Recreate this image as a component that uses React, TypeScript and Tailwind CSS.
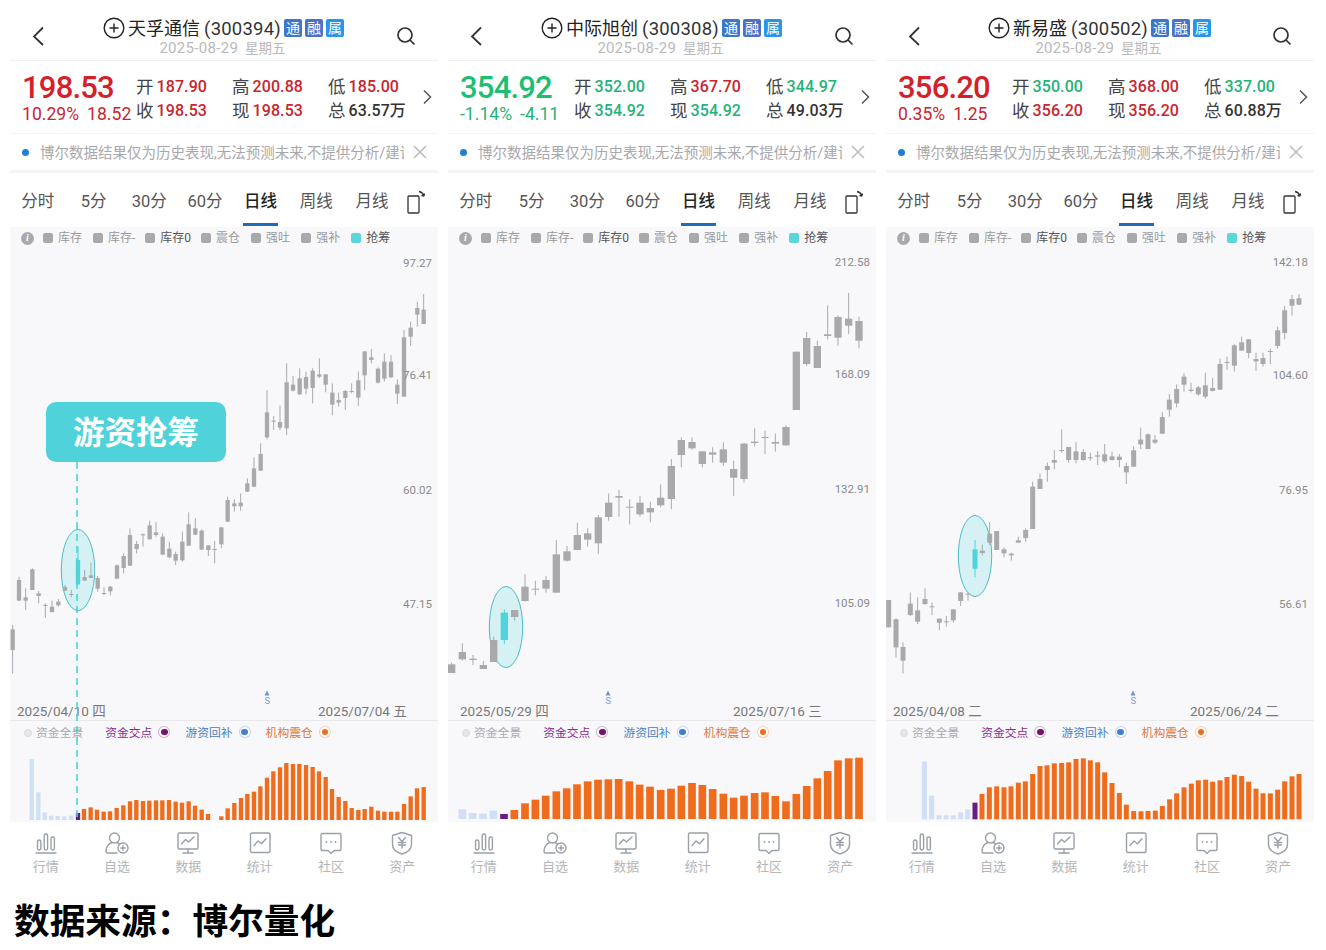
import React from "react";

type C = number[];
const SANS = "font-['Roboto','Noto_Sans_CJK_SC',sans-serif]";

// candle data in 3x-zoomed coordinates: [x, bodyTop, bodyBottom, wickTop, wickBottom]
const p1a: C[] = [[38,418,480,405,550],[57,270,332,260,332],[77,322,332,295,360],[97,238,300,235,300],[116,310,318,303,340],[136,345,347,340,384],[156,350,366,332,368],[175,335,346,327,350],[195,291,302,285,303],[214,312,314,300,322],[293,264,296,258,305],[312,309,311,292,316],[331,290,304,288,316],[351,226,266,224,266],[371,198,234,190,250],[390,135,227,115,228],[410,162,177,153,190],[429,133,135,130,170],[449,106,148,92,148],[468,127,135,97,140],[488,140,194,130,194],[508,176,202,155,205],[527,192,212,185,225],[547,155,211,125,215],[566,103,167,67,167],[586,115,134,85,135],[605,122,179,118,180],[625,166,180,165,198],[644,177,179,153,220],[664,112,163,112,175],[683,30,95,20,95],[703,40,49,28,65],[722,38,49,10,62],[254,261,272,240,272],[273,256,264,218,264]];
const p1b: C[] = [[742,700,725,685,726],[762,655,710,622,712],[782,612,662,580,662],[801,487,562,420,568],[821,512,515,498,540],[840,516,533,467,540],[860,397,535,340,555],[879,404,422,378,425],[899,385,433,355,435],[918,381,416,365,433],[938,362,414,355,460],[958,373,380,325,384],[977,373,404,373,427],[997,428,464,400,495],[1016,450,458,428,470],[1036,423,444,420,480],[1055,423,426,400,430],[1075,391,443,365,468],[1094,304,376,304,420],[1114,322,330,297,340],[1134,356,398,352,400],[1153,335,386,310,395],[1173,335,382,315,383],[1192,404,431,388,462],[1212,262,440,240,440],[1232,233,260,215,288],[1252,174,194,155,230],[1271,179,222,132,222]];
const p2a: C[] = [[20,523,549,518,549],[52,486,508,460,512],[84,506,510,495,525],[115,525,537,513,537],[146,450,516,440,516],[209,360,381,360,392],[240,290,333,253,335],[271,296,299,272,316],[303,270,296,258,308],[334,193,308,150,308],[366,184,212,168,215],[397,135,180,98,180],[428,130,149,115,170],[460,82,160,75,192],[491,38,81,10,92],[522,18,23,0,80],[554,50,52,28,103],[585,38,73,18,80],[616,54,67,35,97],[647,23,46,-17,52],[679,-72,27,-93,58]];
const p2b: C[] = [[709,570,615,562,652],[741,576,595,562,600],[772,604,642,604,652],[803,607,614,592,638],[835,598,638,577,648],[866,657,683,632,738],[897,581,687,578,697],[929,575,579,535,590],[960,561,564,542,612],[991,576,581,550,605],[1023,531,586,525,587],[1054,305,480,305,480],[1085,264,342,246,348],[1117,288,354,272,354],[1148,253,258,166,268],[1179,201,263,196,287],[1211,206,227,129,252],[1242,213,272,200,295]];
const p3a: C[] = [[11,330,412,330,412],[33,388,472,385,503],[54,471,512,457,550],[76,341,375,308,378],[98,361,395,322,402],[120,327,342,295,345],[141,349,351,338,375],[163,386,398,386,420],[184,394,396,378,410],[205,358,391,358,398],[227,307,333,307,348],[249,311,313,308,332],[292,182,189,164,196],[314,131,158,97,165],[335,123,180,123,180],[357,178,190,172,202],[379,191,196,188,212],[400,151,158,140,158],[422,120,144,115,155],[443,-10,117,-25,117],[465,-33,-3,-50,-3]];
const p3b: C[] = [[487,648,660,638,695],[508,630,638,600,658],[530,600,602,538,608],[551,591,630,591,638],[573,604,630,577,640],[595,606,630,597,632],[616,622,624,608,632],[638,616,620,603,645],[659,613,634,582,638],[681,619,630,605,632],[703,620,630,612,652],[724,648,667,638,702],[746,601,650,588,650],[767,569,583,533,597],[789,553,597,550,598],[810,569,578,555,582],[832,501,551,486,551],[853,449,479,432,500],[875,417,460,403,472],[897,380,404,370,425],[918,419,423,398,427],[940,412,433,408,437],[961,406,440,368,446],[983,414,423,383,424],[1005,342,419,326,419],[1026,336,339,320,360],[1048,286,347,283,365],[1070,277,302,260,302],[1091,268,309,268,325],[1113,327,334,308,363],[1134,324,342,308,350],[1156,303,306,296,342],[1178,241,288,230,296],[1199,181,249,168,268],[1221,147,167,135,197],[1242,145,164,132,165]];

// volume bars: [x, top] in zoom coordinates, kind 0 light, 1 purple, 2 orange
const v1 = [[95,132,0],[115,232,0],[134,292,0],[154,302,0],[173,303,0],[193,304,0],[213,302,0],[234,294,1],[252,282,2],[272,277,2],[291,284,2],[311,290,2],[330,289,2],[350,279,2],[370,271,2],[390,259,2],[409,255,2],[429,258,2],[448,257,2],[468,256,2],[487,256,2],[507,255,2],[527,260,2],[546,263,2],[566,259,2],[585,272,2],[605,284,2],[624,297,2],[664,304,2],[683,280,2],[703,264,2],[723,249,2],[742,237,2],[762,230,2],[781,214,2],[801,188,2],[820,169,2],[840,157,2],[859,144,2],[879,147,2],[898,147,2],[918,150,2],[938,156,2],[957,169,2],[977,186,2],[996,222,2],[1016,246,2],[1036,258,2],[1055,279,2],[1075,285,2],[1094,282,2],[1114,275,2],[1134,287,2],[1153,290,2],[1173,290,2],[1192,290,2],[1212,267,2],[1232,244,2],[1251,220,2],[1271,216,2]];
const v2 = [[52,958,0],[83,969,0],[114,971,0],[145,962,0],[177,972,1],...[[208,960],[240,940],[271,929],[302,917],[334,904],[365,895],[396,883],[428,874],[459,869],[490,868],[521,867],[553,874],[584,884],[615,890],[647,900],[678,896],[709,887],[741,879],[772,885],[803,897],[835,911],[866,923],[897,917],[929,909],[960,907],[991,918],[1023,934],[1054,912],[1085,888],[1117,865],[1148,843],[1179,811],[1211,805],[1242,803]].map(([x,t])=>[x,t,2])];
const v3 = [[118,814,0],[140,917,0],[162,976,0],[183,976,0],[205,976,0],[227,967,0],[248,958,0],[270,938,1],...[[291,912],[313,892],[335,889],[357,892],[378,889],[400,878],[421,874],[443,852],[465,828],[486,826],[508,820],[530,819],[551,817],[573,807],[595,805],[616,811],[638,817],[659,847],[681,879],[703,909],[724,944],[746,963],[768,964],[789,963],[811,962],[832,948],[854,928],[875,910],[897,892],[919,881],[940,871],[962,869],[983,875],[1005,871],[1026,861],[1048,854],[1070,858],[1091,875],[1113,896],[1134,910],[1156,910],[1178,899],[1199,874],[1221,859],[1242,852]].map(([x,t])=>[x,t,2])];

type Panel = {
  name: string; code: string; up: boolean; price: string; pct: string; chg: string;
  open: string; openUp: boolean; high: string; low: string; lowUp: boolean; close: string; total: string;
  x0: number; segA: C[]; segB: C[]; aY: number; bodyW: number;
  teal: C; ellipse: [number, number];
  axis: [string, number][]; dateL: [string, number]; dateR: [string, number]; s: number;
  bars: number[][]; barW: number; barBottom: number; barY0: number;
};

const panels: Panel[] = [
  { name: "天孚通信", code: "(300394)", up: true, price: "198.53", pct: "10.29%", chg: "18.52", open: "187.90", openUp: true, high: "200.88", low: "185.00", lowUp: true, close: "198.53", total: "63.57万",
    x0: 0, segA: p1a, segB: p1b, aY: 490, bodyW: 13, teal: [234,210,283,170,285], ellipse: [78,570],
    axis: [["97.27",264],["76.41",376],["60.02",491],["47.15",605]], dateL: ["2025/04/10 四",17], dateR: ["2025/07/04 五",318], s: 267,
    bars: v1, barW: 13, barBottom: 315, barY0: 715 },
  { name: "中际旭创", code: "(300308)", up: false, price: "354.92", pct: "-1.14%", chg: "-4.11", open: "352.00", openUp: false, high: "367.70", low: "344.97", lowUp: false, close: "354.92", total: "49.03万",
    x0: 445, segA: p2a, segB: p2b, aY: 490, bodyW: 22, teal: [178,368,450,358,462], ellipse: [506,627],
    axis: [["212.58",263],["168.09",375],["132.91",490],["105.09",604]], dateL: ["2025/05/29 四",460], dateR: ["2025/07/16 三",733], s: 608,
    bars: v2, barW: 23, barBottom: 987, barY0: 490 },
  { name: "新易盛", code: "(300502)", up: true, price: "356.20", pct: "0.35%", chg: "1.25", open: "350.00", openUp: false, high: "368.00", low: "337.00", lowUp: false, close: "356.20", total: "60.88万",
    x0: 885, segA: p3a, segB: p3b, aY: 490, bodyW: 15, teal: [270,178,236,150,262], ellipse: [975,556],
    axis: [["142.18",263],["104.60",376],["76.95",491],["56.61",605]], dateL: ["2025/04/08 二",893], dateR: ["2025/06/24 二",1190], s: 1133,
    bars: v3, barW: 15, barBottom: 988, barY0: 490 },
];

const RED = "text-[#c9252d]";
const GREEN = "text-[#24b277]";

function Badge({ t, c }: { t: string; c: string }) {
  return <span className={`flex h-[18px] w-[18px] items-center justify-center rounded-[2px] text-[14px] leading-none text-white ${c}`}>{t}</span>;
}

function Stat({ label, value, cls }: { label: string; value: string; cls: string }) {
  return (
    <div className="flex items-center gap-[3px] leading-[24px]">
      <span className="text-[17.5px] text-[#444]">{label}</span>
      <span className={`text-[16px] font-medium tracking-[0.1px] ${cls}`}>{value}</span>
    </div>
  );
}

const legend = [["库存",0],["库存-",0],["库存0",1],["震仓",0],["强吐",0],["强补",0],["抢筹",2]] as const;

function Chart({ p }: { p: Panel }) {
  const left = p.x0 === 0 ? 10 : p.x0 === 445 ? 448 : 886;
  const tx = (x: number) => p.x0 + x / 3 - left;
  const ty = (y: number, y0: number) => y0 + y / 3 - 227;
  const candle = (c: C, y0: number, color: string, k: string) => {
    const [x, bt, bb, wt, wb] = c;
    return (
      <g key={k}>
        <line x1={tx(x)} x2={tx(x)} y1={ty(wt, y0)} y2={ty(wb, y0)} stroke={color} strokeWidth="1" />
        <rect x={tx(x) - p.bodyW / 6} y={ty(bt, y0)} width={p.bodyW / 3} height={Math.max(1, (bb - bt) / 3)} fill={color} />
      </g>
    );
  };
  return (
    <div className="relative h-[493px] bg-[#f8f8fb]">
      <svg className="block h-full w-full" viewBox="0 0 428 493">
        <ellipse cx={p.ellipse[0] - left} cy={p.ellipse[1] - 227} rx="16.7" ry="40.5" fill="#d5f1f4" stroke="#4cbcc6" strokeWidth="1" />
        {p.segA.map((c, i) => candle(c, p.aY, "#a9a9ac", "a" + i))}
        {p.segB.map((c, i) => candle(c, 250, "#a9a9ac", "b" + i))}
        {candle(p.teal, 490, "#4fd3dc", "t")}
        <path d={`M${p.s - left - 2.5} ${468.5} l2.5 -5 l2.5 5z`} fill="#6f94cf" />
      </svg>
      <div className="absolute left-[11px] right-0 top-[3px] flex items-center text-[12px] leading-[16px] text-[#9a9a9a]">
        <span className="mr-[9px] flex h-[13px] w-[13px] items-center justify-center rounded-full bg-[#a9a9ad] font-['Liberation_Serif',serif] text-[10px] font-bold italic leading-none text-white">i</span>
        {legend.map(([t, k], i) => (
          <span key={i} className="flex items-center" style={{ marginRight: i === 1 ? 10 : i === 2 ? 10 : 11 }}>
            <span className={`mr-[5px] h-[10px] w-[10px] rounded-[2px] ${k === 2 ? "bg-[#5ad6dc]" : "bg-[#a9a9ab]"}`} />
            <span className={k ? "text-[#555]" : ""}>{t}</span>
          </span>
        ))}
      </div>
      {p.axis.map(([t, y]) => (
        <span key={t} className="absolute right-[6px] text-[11.5px] leading-none text-[#8a8a8a]" style={{ top: y - 227 - 6 }}>{t}</span>
      ))}
      <span className="absolute text-[9.5px] leading-none text-[#7f9fd4]" style={{ left: p.s - left - 2.5, top: 469 }}>S</span>
      <span className="absolute text-[13.5px] leading-none text-[#777]" style={{ left: p.dateL[1] - left, top: 478 }}>{p.dateL[0]}</span>
      <span className="absolute text-[13.5px] leading-none text-[#777]" style={{ left: p.dateR[1] - left, top: 478 }}>{p.dateR[0]}</span>
    </div>
  );
}

function Volume({ p }: { p: Panel }) {
  const left = p.x0 === 0 ? 10 : p.x0 === 445 ? 448 : 886;
  const color = ["#cfdff5", "#6a1b8a", "#ee6c1c"];
  const bottom = p.barY0 + p.barBottom / 3;
  return (
    <div className="relative h-[102px] border-t border-[#e9e9ec] bg-[#f8f8fb]">
      <svg className="block h-full w-full" viewBox="0 0 428 101">
        {p.bars.map(([x, t, k], i) => {
          const top = p.barY0 + t / 3;
          return <rect key={i} x={p.x0 + x / 3 - left - p.barW / 6} y={top - 721} width={p.barW / 3} height={bottom - top} fill={color[k]} />;
        })}
      </svg>
      <div className="absolute left-[14px] top-[4px] flex items-center text-[11.8px] leading-[16px]">
        <span className="mr-[4px] h-[8px] w-[8px] rounded-full border border-[#ddd] bg-[#e6e6e8]" />
        <span className="mr-[22px] text-[#a9a9ad]">资金全景</span>
        <span className="mr-[6px] text-[#8b2a96]">资金交点</span>
        <Dot c="#7a0f70" />
        <span className="mr-[6px] ml-[15px] text-[#4a80bf]">游资回补</span>
        <Dot c="#3f7fd6" />
        <span className="mr-[6px] ml-[15px] text-[#e0793a]">机构震仓</span>
        <Dot c="#ee6c1c" />
      </div>
    </div>
  );
}

function Dot({ c }: { c: string }) {
  return (
    <span className="mt-[-2px] flex h-[12px] w-[12px] items-center justify-center rounded-full border bg-white" style={{ borderColor: c + "55" }}>
      <span className="h-[6.5px] w-[6.5px] rounded-full" style={{ background: c }} />
    </span>
  );
}

const S = { fill: "none", stroke: "#9aa0a8", strokeWidth: 1.4, strokeLinecap: "round", strokeLinejoin: "round" } as const;
const navIcons = [
  <svg width="24" height="24" viewBox="0 0 24 24" key="0"><g {...S}><rect x="3.5" y="9" width="3.4" height="10" rx="1.7" /><rect x="10.2" y="3" width="3.4" height="16" rx="1.7" /><rect x="17" y="6" width="3.4" height="13" rx="1.7" /><path d="M2 22h20" /></g></svg>,
  <svg width="24" height="24" viewBox="0 0 24 24" key="1"><g {...S}><circle cx="9.5" cy="7" r="5" /><path d="M7 11.5C3.5 12.8 1 16 1 20.5c0 1 .6 1.5 1.5 1.5h9.5" /><path d="M12 11.5c1 .4 1.8 1 2.5 1.5" /><circle cx="18" cy="17" r="5" /><path d="M18 14.8v4.4M15.8 17h4.4" /></g></svg>,
  <svg width="24" height="24" viewBox="0 0 24 24" key="2"><g {...S}><rect x="2" y="2" width="20" height="16" rx="1.5" /><path d="M5.5 13l4-4.5 3 2.5 5.5-5" /><path d="M12 18v3.5M7 22h10" /></g></svg>,
  <svg width="24" height="24" viewBox="0 0 24 24" key="3"><g {...S}><rect x="2.5" y="2" width="19.5" height="19.5" rx="1.5" /><path d="M6 14.5l4-4.5 3.5 2.8 4.5-5" /></g></svg>,
  <svg width="24" height="24" viewBox="0 0 24 24" key="4"><g {...S}><path d="M3.5 2.5h17a1.5 1.5 0 0 1 1.5 1.5v14a1.5 1.5 0 0 1-1.5 1.5H15l-3 3-3-3H3.5A1.5 1.5 0 0 1 2 18V4a1.5 1.5 0 0 1 1.5-1.5z" /><path d="M7.5 11h.01M12 11h.01M16.5 11h.01" strokeWidth="1.8" /></g></svg>,
  <svg width="24" height="24" viewBox="0 0 24 24" key="5"><g {...S}><path d="M12 1.5l9.5 3v9c0 4.5-4.5 8-9.5 9.5-5-1.5-9.5-5-9.5-9.5v-9z" /><path d="M8.5 6.5l3.5 4 3.5-4M12 10.5v6.5M8.5 11.5h7M8.5 14h7" /></g></svg>,
];
const navLabels = ["行情", "自选", "数据", "统计", "社区", "资产"];

function Phone({ p }: { p: Panel }) {
  const clr = p.up ? RED : GREEN;
  return (
    <div className={`w-[428px] shrink-0 ${SANS}`}>
      <div className="flex h-[61px] items-start border-b border-[#f1f1f3] pt-[17px]">
        <svg className="ml-[21px] mt-[8px] shrink-0" width="14" height="22" viewBox="0 0 14 22" fill="none" stroke="#333" strokeWidth="1.8"><path d="M12 2.5L3 11.5l9 8.5" /></svg>
        <div className="flex flex-1 flex-col items-center">
          <div className="flex h-[22px] items-center gap-[3px] pl-[6px]">
            <svg width="22" height="22" viewBox="0 0 22 22" fill="none" stroke="#222" strokeWidth="1.4"><circle cx="11" cy="11" r="9.8" /><path d="M11 6.5v9M6.5 11h9" /></svg>
            <span className="mt-[2px] text-[18px] leading-none whitespace-nowrap text-[#222]">{p.name}<span className="ml-[4px] text-[18.5px] tracking-[0.2px] text-[#333]">{p.code}</span></span>
            <span className="flex gap-[3px]">
              <Badge t="通" c="bg-[#3b78c9]" />
              <Badge t="融" c="bg-[#4a72c6]" />
              <Badge t="属" c="bg-[#2795e8]" />
            </span>
          </div>
          <div className="mt-[1px] flex items-center gap-[7px] pl-[4px] text-[15px] leading-[16px] tracking-[0.3px] text-[#b9b9bb]">
            <span>2025-08-29</span><span className="text-[13.5px] tracking-normal">星期五</span>
          </div>
        </div>
        <svg className="mr-[22px] mt-[9px] shrink-0" width="20" height="20" viewBox="0 0 20 20" fill="none" stroke="#333" strokeWidth="1.7"><circle cx="9" cy="9" r="7" /><path d="M14 14l4.5 4.5" /></svg>
      </div>

      <div className="flex h-[73px] border-b border-[#f4f4f6] pl-[12px]">
        <div className="w-[114px] shrink-0 pt-[10px]">
          <div className={`text-[31px] font-medium leading-[33px] tracking-[-0.8px] ${p.up ? "text-[#d5202a]" : "text-[#1cbf72]"}`}>{p.price}</div>
          <div className={`flex gap-[8px] whitespace-nowrap text-[17.6px] leading-[20px] ${clr}`}><span>{p.pct}</span><span>{p.chg}</span></div>
        </div>
        <div className="flex flex-1 items-stretch pt-[14px]">
          <div className="w-[96px]">
            <Stat label="开" value={p.open} cls={p.openUp ? RED : GREEN} />
            <Stat label="收" value={p.close} cls={clr} />
          </div>
          <div className="w-[96px]">
            <Stat label="高" value={p.high} cls={RED} />
            <Stat label="现" value={p.close} cls={clr} />
          </div>
          <div className="w-[94px]">
            <Stat label="低" value={p.low} cls={p.lowUp ? RED : GREEN} />
            <Stat label="总" value={p.total} cls="text-[#333]" />
          </div>
          <svg className="mt-[14px] shrink-0" width="10" height="16" viewBox="0 0 10 16" fill="none" stroke="#555" strokeWidth="1.5"><path d="M2 1.5L8.5 8 2 14.5" /></svg>
        </div>
      </div>

      <div className="flex h-[39px] items-center border-b-[3px] border-[#f3f3f5] pl-[12px]">
        <span className="mr-[11px] h-[7px] w-[7px] shrink-0 rounded-full bg-[#1f7fd6]" />
        <span className="w-[364px] overflow-hidden pt-[3px] text-[14.5px] whitespace-nowrap text-[#a8a8ab]">博尔数据结果仅为历史表现,无法预测未来,不提供分析/建议</span>
        <svg className="ml-[9px] shrink-0" width="14" height="14" viewBox="0 0 14 14" stroke="#bbb" strokeWidth="1.5"><path d="M1 1l12 12M13 1L1 13" /></svg>
      </div>

      <div className="relative flex h-[54px] text-[16.5px] text-[#555]">
        {["分时", "5分", "30分", "60分", "日线", "周线", "月线"].map((t, i) => (
          <span key={t} className={`relative flex w-[55.7px] items-center justify-center pt-[4px] ${i === 4 ? "font-medium text-[#222]" : ""}`}>
            {t}
            {i === 4 && <span className="absolute bottom-[1px] left-[10px] h-[3px] w-[35px] bg-[#1e6bc0]" />}
          </span>
        ))}
        <svg className="mt-[17px] ml-[6px] shrink-0" width="20" height="24" viewBox="0 0 20 24" fill="none" stroke="#333" strokeWidth="1.3"><rect x="2" y="6" width="11" height="17" rx="1" /><path d="M13 1.5c2.5.5 4 2 5 4.5M18 6l.5-2.5M18 6l-2.5-.5" /></svg>
      </div>

      <Chart p={p} />
      <Volume p={p} />

      <div className="grid h-[58px] grid-cols-6">
        {navLabels.map((t, i) => (
          <div key={t} className="flex flex-col items-center pt-[9px]">
            {navIcons[i]}
            <span className="mt-[4px] text-[13px] leading-[16px] text-[#b3b5b9]">{t}</span>
          </div>
        ))}
      </div>
    </div>
  );
}

export default function App() {
  return (
    <div className={`relative h-[950px] w-[1326px] overflow-hidden bg-white ${SANS}`}>
      <div className="flex gap-[10px] pl-[10px]">
        {panels.map((p) => <Phone key={p.name} p={p} />)}
      </div>
      <div className="pl-[14px] pt-[20px] text-[35.7px] leading-[44px] font-bold text-black">数据来源：博尔量化</div>
      <div className="absolute left-[46px] top-[402px] flex h-[60px] w-[180px] items-center justify-center rounded-[10px] bg-[#4fd2da] pt-[3px] text-[31.5px] font-bold text-white">游资抢筹</div>
      <svg className="absolute left-[76px] top-[462px]" width="2" height="360">
        <line x1="1" x2="1" y1="0" y2="360" stroke="#4fd2da" strokeWidth="1.6" strokeDasharray="7 5" />
      </svg>
    </div>
  );
}
